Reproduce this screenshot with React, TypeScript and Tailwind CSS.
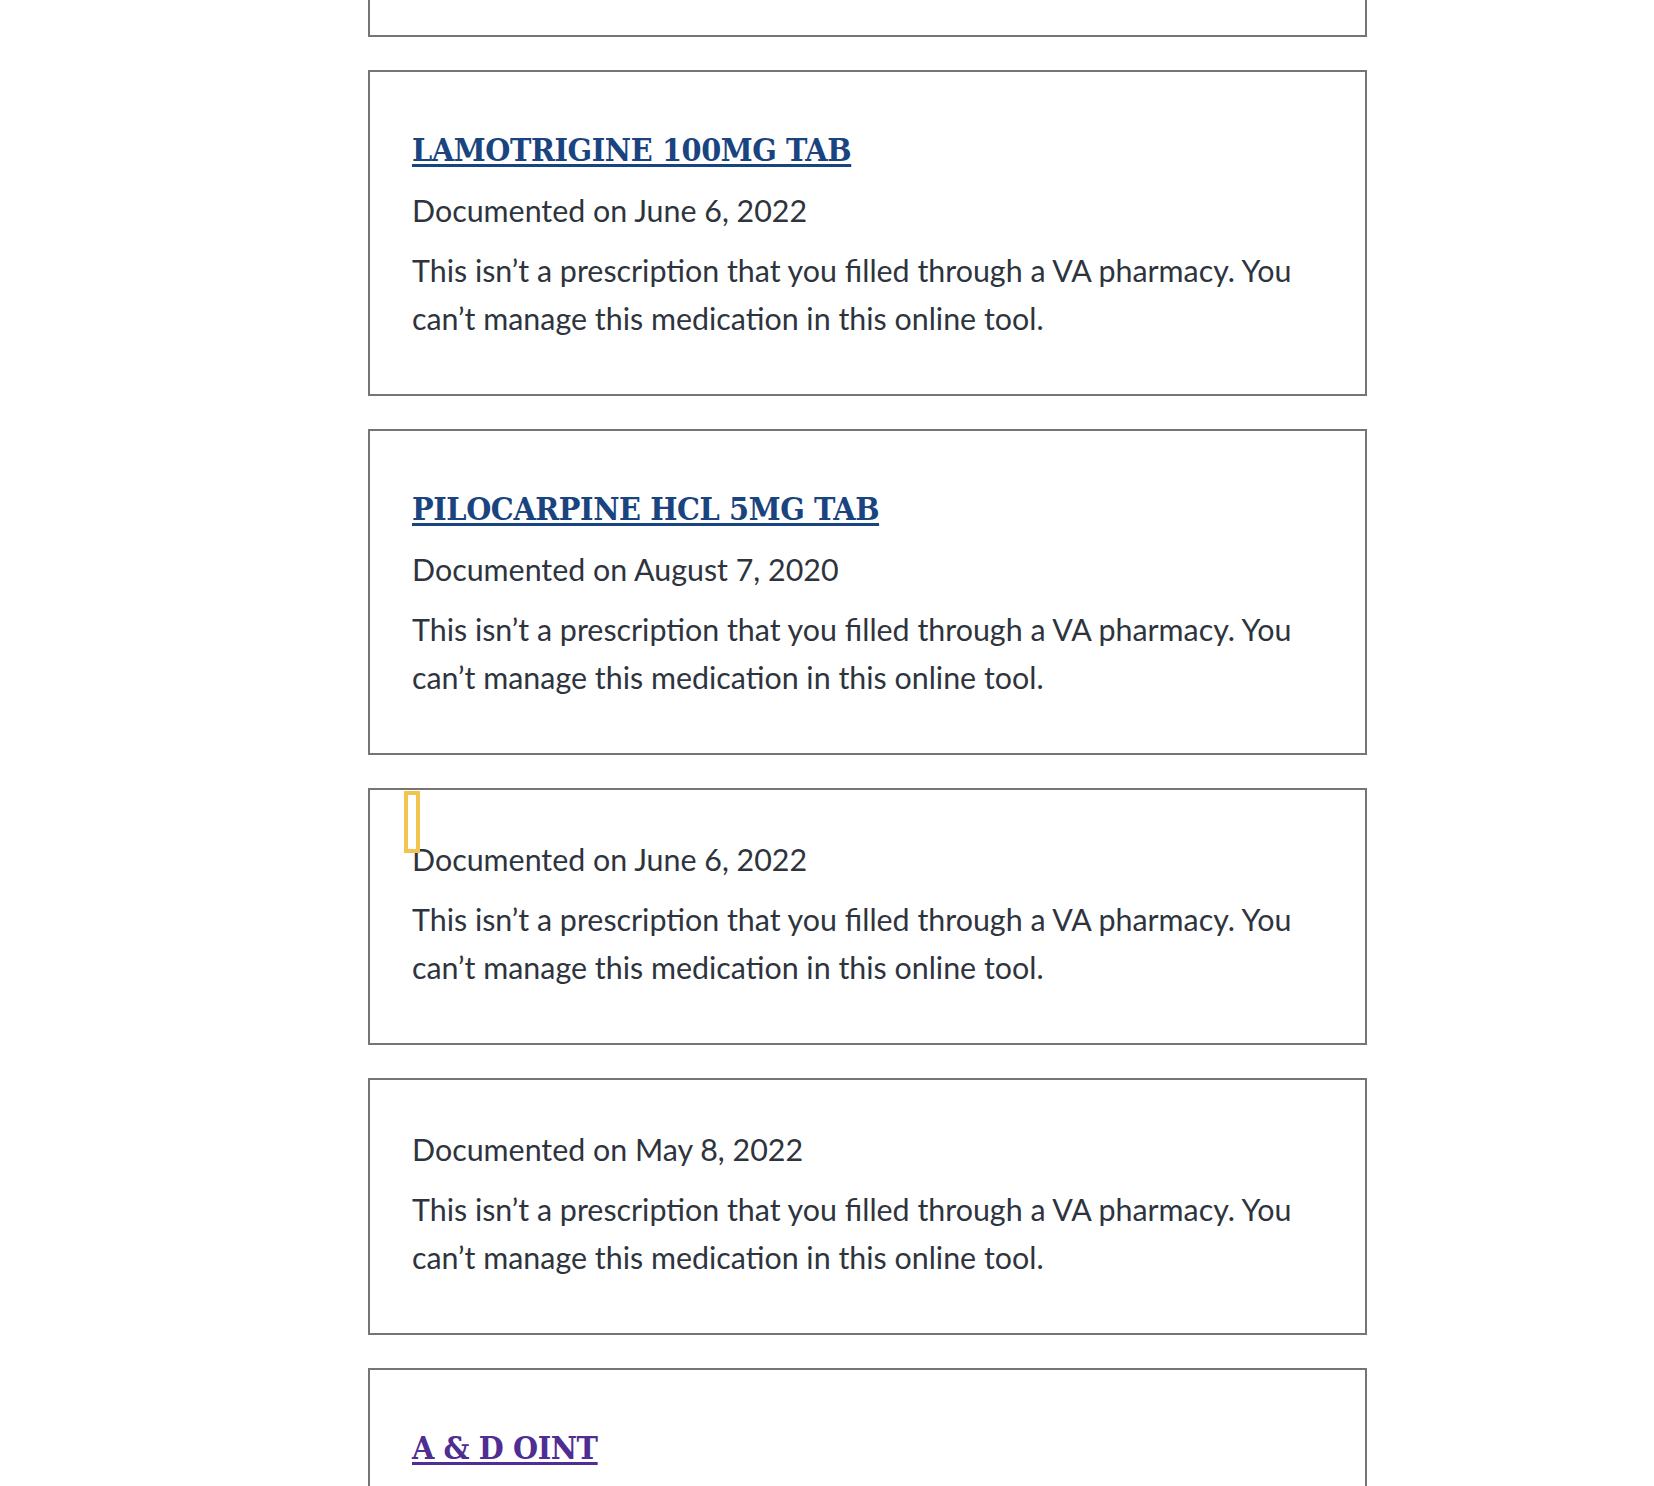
import React from "react";

type Card = {
  name?: string;
  visited?: boolean;
  date?: string;
  focus?: boolean;
};

const cards: Card[] = [
  { name: "LAMOTRIGINE 100MG TAB", date: "June 6, 2022" },
  { name: "PILOCARPINE HCL 5MG TAB", date: "August 7, 2020" },
  { date: "June 6, 2022", focus: true },
  { date: "May 8, 2022" },
  { name: "A & D OINT", visited: true },
];

function MedCard({ card }: { card: Card }) {
  return (
    <div
      className={`relative w-[999px] border-2 border-[#757575] bg-white px-[42px] pt-[45px] pb-[52px] ${
        card.date ? "" : "min-h-[326px]"
      }`}
    >
      {card.focus && (
        <div className="absolute left-[34px] top-[1px] h-[62px] w-[16px] border-4 border-[#f0c44f]" />
      )}
      {card.name && (
        <h3 className="mt-[11px] mb-[14px] h-[44px] font-['DejaVu_Serif_Condensed','DejaVu_Serif',serif] font-stretch-condensed text-[32px] font-bold leading-[44px] tracking-[-0.4px]">
          <a
            href="#"
            className={`underline decoration-[3px] underline-offset-[3px] ${
              card.visited ? "text-[#4f2d92]" : "text-[#1a4480]"
            }`}
          >
            {card.name}
          </a>
        </h3>
      )}
      {card.date && (
        <>
          <p className="mb-[12px]">Documented on {card.date}</p>
          <p>
            This isn’t a prescription that you filled through a VA pharmacy.
            You can’t manage this medication in this online tool.
          </p>
        </>
      )}
    </div>
  );
}

export default function App() {
  return (
    <div className="h-[1486px] w-full overflow-hidden bg-white font-['Lato',sans-serif] text-[30.4px] leading-[48px] text-[#2e343d]">
      <div className="ml-[368px] flex flex-col gap-[33px]">
        <div className="h-[37px] w-[999px] border-2 border-t-0 border-[#757575] bg-white" />
        {cards.map((c, i) => (
          <MedCard key={i} card={c} />
        ))}
      </div>
    </div>
  );
}
